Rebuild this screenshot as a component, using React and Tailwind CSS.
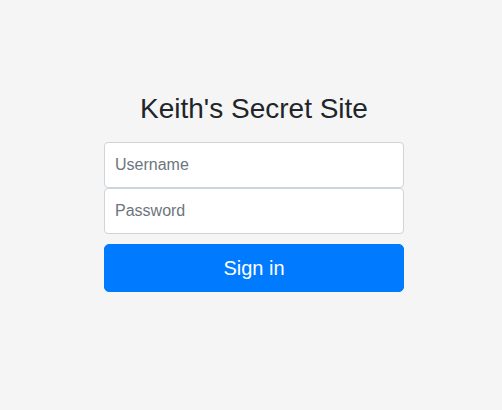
import React from 'react';

export default function App() {
  return (
    <div
      className="min-h-[410px] bg-[#f5f5f5] flex justify-center pl-[6px] pt-[92px] text-[#212529]"
      style={{ fontFamily: '"Liberation Sans", Arial, sans-serif' }}
    >
      <form className="w-[300px] flex flex-col text-center" onSubmit={(e) => e.preventDefault()}>
        <h1 className="text-[28px] leading-[1.2] font-normal mb-4">Keith's Secret Site</h1>

        <input
          type="text"
          placeholder="Username"
          className="block w-full p-[10px] text-base leading-6 bg-white border border-[#ced4da] rounded-[4px] placeholder-[#6c757d] focus:outline-none"
        />
        <input
          type="password"
          placeholder="Password"
          className="block w-full p-[10px] text-base leading-6 bg-white border border-[#ced4da] rounded-[4px] mb-[10px] placeholder-[#6c757d] focus:outline-none"
        />

        <button
          type="submit"
          className="block w-full py-2 px-4 text-[20px] leading-[1.5] text-white bg-[#007bff] border border-[#007bff] rounded-[5px]"
        >
          Sign in
        </button>
      </form>
    </div>
  );
}
